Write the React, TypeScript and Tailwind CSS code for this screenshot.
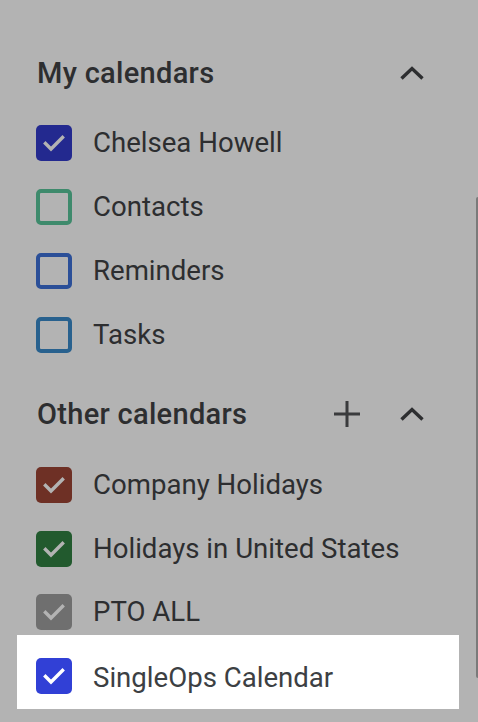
import React from "react";

const itemFont = { fontFamily: "Roboto, 'Liberation Sans', sans-serif" };
const headFont = { fontFamily: "Roboto, 'Liberation Sans', sans-serif" };

function Check({ color }: { color: string }) {
  return (
    <svg width="36" height="36" viewBox="0 0 36 36" className="block">
      <polyline
        points="9.5,18.5 15,24 26.5,12.5"
        fill="none"
        stroke={color}
        strokeWidth="3.4"
        strokeLinecap="square"
      />
    </svg>
  );
}

function Box({
  fill,
  border,
  checked,
  checkColor,
}: {
  fill?: string;
  border?: string;
  checked: boolean;
  checkColor?: string;
}) {
  return (
    <div
      className="w-[36px] h-[36px] rounded-[5px] shrink-0 box-border"
      style={{
        backgroundColor: fill ?? "transparent",
        border: border ? `4px solid ${border}` : undefined,
      }}
    >
      {checked && <Check color={checkColor ?? "#b3b3b3"} />}
    </div>
  );
}

function Row({
  label,
  children,
  outer = "h-[64px] pt-[14px]",
}: {
  label: string;
  children: React.ReactNode;
  outer?: string;
}) {
  return (
    <div className={`${outer} pl-[36px]`}>
      <div className="flex items-center h-[36px]">
        {children}
        <span
          className="ml-[21px] text-[27.6px] leading-none text-[#2d2e30]"
          style={itemFont}
        >
          {label}
        </span>
      </div>
    </div>
  );
}

function Chevron() {
  return (
    <svg width="26" height="18" viewBox="0 0 26 18" className="block">
      <polyline
        points="2.5,14.5 13,4.5 23.5,14.5"
        fill="none"
        stroke="#2d2e30"
        strokeWidth="3.4"
      />
    </svg>
  );
}

function Plus() {
  return (
    <svg width="28" height="28" viewBox="0 0 28 28" className="block">
      <path d="M14 1v26M1 14h26" stroke="#3a3b3d" strokeWidth="3" />
    </svg>
  );
}

export default function App() {
  return (
    <div className="relative w-[478px] h-[722px] bg-[#b3b3b3] overflow-hidden">
      <div className="pt-[49px]">
        <div className="flex items-center h-[48px] pl-[37px] pr-[53px]">
          <span
            className="text-[29px] leading-none font-medium tracking-[0.3px] text-[#2d2e30] flex-1"
            style={headFont}
          >
            My calendars
          </span>
          <Chevron />
        </div>
        <div className="mt-[14px]">
          <Row label="Chelsea Howell">
            <Box fill="#23298f" checked />
          </Row>
          <Row label="Contacts">
            <Box border="#3e8a6c" checked={false} />
          </Row>
          <Row label="Reminders">
            <Box border="#2b4f98" checked={false} />
          </Row>
          <Row label="Tasks">
            <Box border="#28618e" checked={false} />
          </Row>
        </div>
        <div className="flex items-center h-[48px] mt-[23px] pl-[37px] pr-[53px]">
          <span
            className="text-[29px] leading-none font-medium tracking-[0.3px] text-[#2d2e30] flex-1"
            style={headFont}
          >
            Other calendars
          </span>
          <div className="mr-[38px]">
            <Plus />
          </div>
          <Chevron />
        </div>
        <div className="mt-[15px]">
          <Row label="Company Holidays">
            <Box fill="#6e3025" checked />
          </Row>
          <Row label="Holidays in United States">
            <Box fill="#225a2e" checked />
          </Row>
          <Row label="PTO ALL" outer="h-[54px] pt-[13px]">
            <Box fill="#6f6f6f" checked />
          </Row>
          <div className="ml-[17px] w-[442px] h-[74px] bg-white pt-[23px] pl-[19px]">
            <div className="flex items-center h-[36px]">
              <Box fill="#3140d6" checked checkColor="#ffffff" />
              <span
                className="ml-[21px] mt-[3px] text-[27.6px] leading-none text-[#3c4043]"
                style={itemFont}
              >
                SingleOps Calendar
              </span>
            </div>
          </div>
        </div>
      </div>
      <div className="absolute right-0 top-[197px] w-[2px] h-[481px] rounded-l-[2px] bg-[#7a7a7a]" />
    </div>
  );
}
